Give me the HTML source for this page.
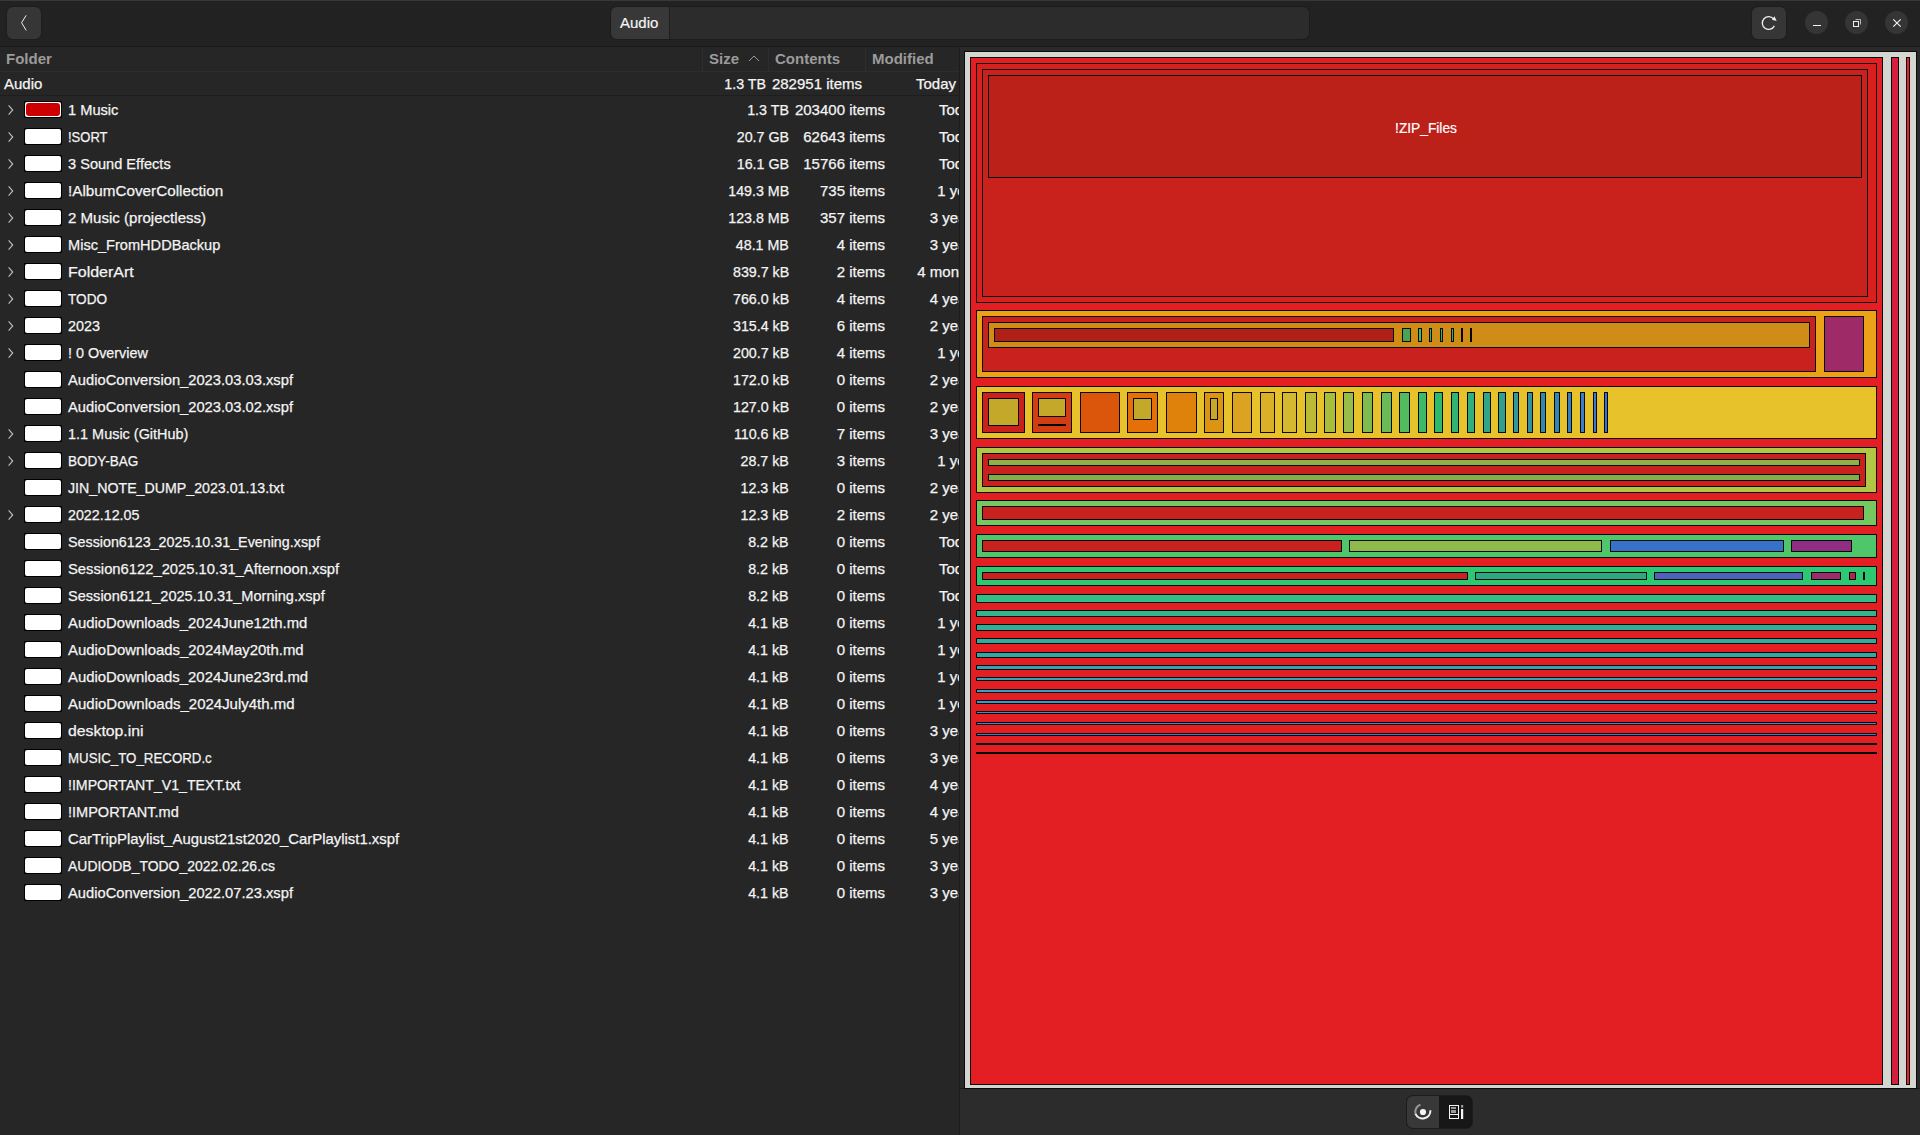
<!DOCTYPE html>
<html><head><meta charset="utf-8"><title>Baobab</title>
<style>
html,body{margin:0;padding:0;}
body{width:1920px;height:1135px;position:relative;overflow:hidden;background:#262626;font-family:"Liberation Sans",sans-serif;color:#f2f2f2;}
.abs{position:absolute;}
#hdr{position:absolute;left:0;top:0;width:1920px;height:46px;background:#222222;}
#hdrtop{position:absolute;left:0;top:0;width:1920px;height:1px;background:#383838;}
#hdrbot{position:absolute;left:0;top:46px;width:1920px;height:1px;background:#1a1a1a;}
.btn{position:absolute;top:7px;width:34px;height:32px;border-radius:6px;background:#363636;box-shadow:0 0 0 1px #1d1d1d;}
#path{position:absolute;left:611px;top:7px;width:698px;height:32px;border-radius:6px;background:#2c2c2c;box-shadow:0 0 0 1px #1c1c1c;overflow:hidden;}
#pathseg{position:absolute;left:0;top:0;width:58px;height:32px;background:#383838;border-right:1px solid #1e1e1e;}
#pathtxt{position:absolute;left:9px;top:0;line-height:32px;font-size:15px;color:#f4f4f4;-webkit-text-stroke:0.2px #f4f4f4;}
.circ{position:absolute;top:11px;width:23px;height:23px;border-radius:12px;background:#353535;}
#left{position:absolute;left:0;top:47px;width:959px;height:1088px;background:#262626;overflow:hidden;}
#vsep{position:absolute;left:959px;top:47px;width:1px;height:1088px;background:#1c1c1c;}
#right{position:absolute;left:960px;top:47px;width:960px;height:1088px;background:#2a2a2a;}
#bottombar{position:absolute;left:960px;top:1089px;width:960px;height:46px;background:#2c2c2c;}
.colh{position:absolute;top:0;height:24px;line-height:24px;font-size:15px;font-weight:bold;color:#9b9b9b;}
.colsep{position:absolute;top:0;width:1px;height:24px;background:#2e2e2e;}
.t{position:absolute;height:27px;line-height:27px;font-size:15px;white-space:nowrap;color:#f4f4f4;-webkit-text-stroke:0.25px #f4f4f4;}
.nm{left:68px;transform-origin:0 0;}
.sz{right:170px;text-align:right;transform:scaleX(0.95);transform-origin:100% 0;}
.ct{right:74px;text-align:right;}
.md{right:-20px;text-align:right;}
.chev{position:absolute;left:7px;}
.sw{position:absolute;left:24px;width:38px;height:17px;background:#000;border-radius:1px;}
.sw i{position:absolute;left:1px;top:1px;width:36px;height:15px;background:#fff;border-radius:2px;}
.sw.red i::after{content:"";position:absolute;left:1px;top:1px;width:34px;height:13px;background:#cc0000;border-radius:3px;}
.b{position:absolute;box-sizing:border-box;border:1px solid #0a0a0a;}
</style></head><body>
<div id="hdr"></div><div id="hdrtop"></div><div id="hdrbot"></div>
<div class="btn" style="left:7px"><svg width="34" height="32" viewBox="0 0 34 32" style="position:absolute;left:0;top:0"><path d="M19.2 8.3 L14.6 15.7 L19.2 23.4" fill="none" stroke="#f0f0f0" stroke-width="1.0"/></svg></div>
<div id="path"><div id="pathseg"></div><div id="pathtxt">Audio</div></div>
<div class="btn" style="left:1752px"><svg width="34" height="32" viewBox="0 0 34 32" style="position:absolute;left:0;top:0">
<path d="M21.6 11.9 A6.4 6.4 0 1 0 22.4 18.9" fill="none" stroke="#f0f0f0" stroke-width="1.3"/>
<path d="M22.4 9.2 L24.7 14 L19.9 12.8 Z" fill="#f0f0f0"/></svg></div>
<div class="circ" style="left:1805px"><div style="position:absolute;left:8px;top:13.6px;width:8px;height:1.5px;background:#f0f0f0"></div></div>
<div class="circ" style="left:1845px"><svg width="24" height="24" viewBox="0 0 24 24" style="position:absolute;left:0;top:0"><rect x="8.5" y="10.5" width="5" height="5" fill="none" stroke="#f0f0f0" stroke-width="1"/><path d="M10.5 8.5 H15.5 V13.5" fill="none" stroke="#b8b8b8" stroke-width="1"/></svg></div>
<div class="circ" style="left:1885px"><svg width="24" height="24" viewBox="0 0 24 24" style="position:absolute;left:0;top:0"><path d="M8.3 8.3 L15.7 15.7 M15.7 8.3 L8.3 15.7" stroke="#f0f0f0" stroke-width="1.2"/></svg></div>

<div id="left">
<div class="colh" style="left:6px">Folder</div>
<div class="colh" style="left:709px">Size</div>
<svg style="position:absolute;left:748px;top:8px" width="12" height="7" viewBox="0 0 12 7"><path d="M1 6 L6 1 L11 6" fill="none" stroke="#9b9b9b" stroke-width="1"/></svg>
<div class="colh" style="left:775px">Contents</div>
<div class="colh" style="left:872px">Modified</div>
<div class="colsep" style="left:702px"></div>
<div class="colsep" style="left:768px"></div>
<div class="colsep" style="left:865px"></div>
<div style="position:absolute;left:0;top:24px;width:959px;height:1px;background:#2d2d2d"></div>
<div style="position:absolute;left:0;top:48px;width:959px;height:1px;background:#1e1e1e"></div>
</div>
<div id="vsep"></div>
<div class="t" style="left:4px;top:72px;height:24px;line-height:24px">Audio</div>
<div class="t" style="left:0;width:766px;top:72px;height:24px;line-height:24px;text-align:right;transform:scaleX(0.95);transform-origin:100% 0">1.3 TB</div>
<div class="t" style="left:0;width:862px;top:72px;height:24px;line-height:24px;text-align:right">282951 items</div>
<div class="t" style="left:0;width:956px;top:72px;height:24px;line-height:24px;text-align:right">Today</div>
<div id="rows" style="position:absolute;left:0;top:0;width:959px;height:1135px;overflow:hidden">
<svg class="chev" style="top:104px" width="8" height="12" viewBox="0 0 8 12"><path d="M1.6 1.4 L5.7 6 L1.6 10.6" fill="none" stroke="#bcbcbc" stroke-width="1.15"/></svg>
<div class="sw red" style="top:101px"><i></i></div>
<div class="t nm" style="top:96px;transform:scaleX(0.976)">1 Music</div>
<div class="t sz" style="top:96px">1.3 TB</div>
<div class="t ct" style="top:96px">203400 items</div>
<div class="t md" style="top:96px">Today</div>
<svg class="chev" style="top:131px" width="8" height="12" viewBox="0 0 8 12"><path d="M1.6 1.4 L5.7 6 L1.6 10.6" fill="none" stroke="#bcbcbc" stroke-width="1.15"/></svg>
<div class="sw" style="top:128px"><i></i></div>
<div class="t nm" style="top:123px;transform:scaleX(0.867)">!SORT</div>
<div class="t sz" style="top:123px">20.7 GB</div>
<div class="t ct" style="top:123px">62643 items</div>
<div class="t md" style="top:123px">Today</div>
<svg class="chev" style="top:158px" width="8" height="12" viewBox="0 0 8 12"><path d="M1.6 1.4 L5.7 6 L1.6 10.6" fill="none" stroke="#bcbcbc" stroke-width="1.15"/></svg>
<div class="sw" style="top:155px"><i></i></div>
<div class="t nm" style="top:150px;transform:scaleX(0.972)">3 Sound Effects</div>
<div class="t sz" style="top:150px">16.1 GB</div>
<div class="t ct" style="top:150px">15766 items</div>
<div class="t md" style="top:150px">Today</div>
<svg class="chev" style="top:185px" width="8" height="12" viewBox="0 0 8 12"><path d="M1.6 1.4 L5.7 6 L1.6 10.6" fill="none" stroke="#bcbcbc" stroke-width="1.15"/></svg>
<div class="sw" style="top:182px"><i></i></div>
<div class="t nm" style="top:177px;transform:scaleX(1.017)">!AlbumCoverCollection</div>
<div class="t sz" style="top:177px">149.3 MB</div>
<div class="t ct" style="top:177px">735 items</div>
<div class="t md" style="top:177px">1 year</div>
<svg class="chev" style="top:212px" width="8" height="12" viewBox="0 0 8 12"><path d="M1.6 1.4 L5.7 6 L1.6 10.6" fill="none" stroke="#bcbcbc" stroke-width="1.15"/></svg>
<div class="sw" style="top:209px"><i></i></div>
<div class="t nm" style="top:204px;transform:scaleX(1.004)">2 Music (projectless)</div>
<div class="t sz" style="top:204px">123.8 MB</div>
<div class="t ct" style="top:204px">357 items</div>
<div class="t md" style="top:204px">3 years</div>
<svg class="chev" style="top:239px" width="8" height="12" viewBox="0 0 8 12"><path d="M1.6 1.4 L5.7 6 L1.6 10.6" fill="none" stroke="#bcbcbc" stroke-width="1.15"/></svg>
<div class="sw" style="top:236px"><i></i></div>
<div class="t nm" style="top:231px;transform:scaleX(0.972)">Misc_FromHDDBackup</div>
<div class="t sz" style="top:231px">48.1 MB</div>
<div class="t ct" style="top:231px">4 items</div>
<div class="t md" style="top:231px">3 years</div>
<svg class="chev" style="top:266px" width="8" height="12" viewBox="0 0 8 12"><path d="M1.6 1.4 L5.7 6 L1.6 10.6" fill="none" stroke="#bcbcbc" stroke-width="1.15"/></svg>
<div class="sw" style="top:263px"><i></i></div>
<div class="t nm" style="top:258px;transform:scaleX(1.066)">FolderArt</div>
<div class="t sz" style="top:258px">839.7 kB</div>
<div class="t ct" style="top:258px">2 items</div>
<div class="t md" style="top:258px">4 months</div>
<svg class="chev" style="top:293px" width="8" height="12" viewBox="0 0 8 12"><path d="M1.6 1.4 L5.7 6 L1.6 10.6" fill="none" stroke="#bcbcbc" stroke-width="1.15"/></svg>
<div class="sw" style="top:290px"><i></i></div>
<div class="t nm" style="top:285px;transform:scaleX(0.907)">TODO</div>
<div class="t sz" style="top:285px">766.0 kB</div>
<div class="t ct" style="top:285px">4 items</div>
<div class="t md" style="top:285px">4 years</div>
<svg class="chev" style="top:320px" width="8" height="12" viewBox="0 0 8 12"><path d="M1.6 1.4 L5.7 6 L1.6 10.6" fill="none" stroke="#bcbcbc" stroke-width="1.15"/></svg>
<div class="sw" style="top:317px"><i></i></div>
<div class="t nm" style="top:312px;transform:scaleX(0.959)">2023</div>
<div class="t sz" style="top:312px">315.4 kB</div>
<div class="t ct" style="top:312px">6 items</div>
<div class="t md" style="top:312px">2 years</div>
<svg class="chev" style="top:347px" width="8" height="12" viewBox="0 0 8 12"><path d="M1.6 1.4 L5.7 6 L1.6 10.6" fill="none" stroke="#bcbcbc" stroke-width="1.15"/></svg>
<div class="sw" style="top:344px"><i></i></div>
<div class="t nm" style="top:339px;transform:scaleX(0.958)">! 0 Overview</div>
<div class="t sz" style="top:339px">200.7 kB</div>
<div class="t ct" style="top:339px">4 items</div>
<div class="t md" style="top:339px">1 year</div>
<div class="sw" style="top:371px"><i></i></div>
<div class="t nm" style="top:366px;transform:scaleX(0.981)">AudioConversion_2023.03.03.xspf</div>
<div class="t sz" style="top:366px">172.0 kB</div>
<div class="t ct" style="top:366px">0 items</div>
<div class="t md" style="top:366px">2 years</div>
<div class="sw" style="top:398px"><i></i></div>
<div class="t nm" style="top:393px;transform:scaleX(0.981)">AudioConversion_2023.03.02.xspf</div>
<div class="t sz" style="top:393px">127.0 kB</div>
<div class="t ct" style="top:393px">0 items</div>
<div class="t md" style="top:393px">2 years</div>
<svg class="chev" style="top:428px" width="8" height="12" viewBox="0 0 8 12"><path d="M1.6 1.4 L5.7 6 L1.6 10.6" fill="none" stroke="#bcbcbc" stroke-width="1.15"/></svg>
<div class="sw" style="top:425px"><i></i></div>
<div class="t nm" style="top:420px;transform:scaleX(0.963)">1.1 Music (GitHub)</div>
<div class="t sz" style="top:420px">110.6 kB</div>
<div class="t ct" style="top:420px">7 items</div>
<div class="t md" style="top:420px">3 years</div>
<svg class="chev" style="top:455px" width="8" height="12" viewBox="0 0 8 12"><path d="M1.6 1.4 L5.7 6 L1.6 10.6" fill="none" stroke="#bcbcbc" stroke-width="1.15"/></svg>
<div class="sw" style="top:452px"><i></i></div>
<div class="t nm" style="top:447px;transform:scaleX(0.903)">BODY-BAG</div>
<div class="t sz" style="top:447px">28.7 kB</div>
<div class="t ct" style="top:447px">3 items</div>
<div class="t md" style="top:447px">1 year</div>
<div class="sw" style="top:479px"><i></i></div>
<div class="t nm" style="top:474px;transform:scaleX(0.946)">JIN_NOTE_DUMP_2023.01.13.txt</div>
<div class="t sz" style="top:474px">12.3 kB</div>
<div class="t ct" style="top:474px">0 items</div>
<div class="t md" style="top:474px">2 years</div>
<svg class="chev" style="top:509px" width="8" height="12" viewBox="0 0 8 12"><path d="M1.6 1.4 L5.7 6 L1.6 10.6" fill="none" stroke="#bcbcbc" stroke-width="1.15"/></svg>
<div class="sw" style="top:506px"><i></i></div>
<div class="t nm" style="top:501px;transform:scaleX(0.951)">2022.12.05</div>
<div class="t sz" style="top:501px">12.3 kB</div>
<div class="t ct" style="top:501px">2 items</div>
<div class="t md" style="top:501px">2 years</div>
<div class="sw" style="top:533px"><i></i></div>
<div class="t nm" style="top:528px;transform:scaleX(0.953)">Session6123_2025.10.31_Evening.xspf</div>
<div class="t sz" style="top:528px">8.2 kB</div>
<div class="t ct" style="top:528px">0 items</div>
<div class="t md" style="top:528px">Today</div>
<div class="sw" style="top:560px"><i></i></div>
<div class="t nm" style="top:555px;transform:scaleX(0.985)">Session6122_2025.10.31_Afternoon.xspf</div>
<div class="t sz" style="top:555px">8.2 kB</div>
<div class="t ct" style="top:555px">0 items</div>
<div class="t md" style="top:555px">Today</div>
<div class="sw" style="top:587px"><i></i></div>
<div class="t nm" style="top:582px;transform:scaleX(0.971)">Session6121_2025.10.31_Morning.xspf</div>
<div class="t sz" style="top:582px">8.2 kB</div>
<div class="t ct" style="top:582px">0 items</div>
<div class="t md" style="top:582px">Today</div>
<div class="sw" style="top:614px"><i></i></div>
<div class="t nm" style="top:609px;transform:scaleX(0.993)">AudioDownloads_2024June12th.md</div>
<div class="t sz" style="top:609px">4.1 kB</div>
<div class="t ct" style="top:609px">0 items</div>
<div class="t md" style="top:609px">1 year</div>
<div class="sw" style="top:641px"><i></i></div>
<div class="t nm" style="top:636px;transform:scaleX(0.995)">AudioDownloads_2024May20th.md</div>
<div class="t sz" style="top:636px">4.1 kB</div>
<div class="t ct" style="top:636px">0 items</div>
<div class="t md" style="top:636px">1 year</div>
<div class="sw" style="top:668px"><i></i></div>
<div class="t nm" style="top:663px;transform:scaleX(0.993)">AudioDownloads_2024June23rd.md</div>
<div class="t sz" style="top:663px">4.1 kB</div>
<div class="t ct" style="top:663px">0 items</div>
<div class="t md" style="top:663px">1 year</div>
<div class="sw" style="top:695px"><i></i></div>
<div class="t nm" style="top:690px;transform:scaleX(0.999)">AudioDownloads_2024July4th.md</div>
<div class="t sz" style="top:690px">4.1 kB</div>
<div class="t ct" style="top:690px">0 items</div>
<div class="t md" style="top:690px">1 year</div>
<div class="sw" style="top:722px"><i></i></div>
<div class="t nm" style="top:717px;transform:scaleX(1.054)">desktop.ini</div>
<div class="t sz" style="top:717px">4.1 kB</div>
<div class="t ct" style="top:717px">0 items</div>
<div class="t md" style="top:717px">3 years</div>
<div class="sw" style="top:749px"><i></i></div>
<div class="t nm" style="top:744px;transform:scaleX(0.886)">MUSIC_TO_RECORD.c</div>
<div class="t sz" style="top:744px">4.1 kB</div>
<div class="t ct" style="top:744px">0 items</div>
<div class="t md" style="top:744px">3 years</div>
<div class="sw" style="top:776px"><i></i></div>
<div class="t nm" style="top:771px;transform:scaleX(0.943)">!IMPORTANT_V1_TEXT.txt</div>
<div class="t sz" style="top:771px">4.1 kB</div>
<div class="t ct" style="top:771px">0 items</div>
<div class="t md" style="top:771px">4 years</div>
<div class="sw" style="top:803px"><i></i></div>
<div class="t nm" style="top:798px;transform:scaleX(0.968)">!IMPORTANT.md</div>
<div class="t sz" style="top:798px">4.1 kB</div>
<div class="t ct" style="top:798px">0 items</div>
<div class="t md" style="top:798px">4 years</div>
<div class="sw" style="top:830px"><i></i></div>
<div class="t nm" style="top:825px;transform:scaleX(0.992)">CarTripPlaylist_August21st2020_CarPlaylist1.xspf</div>
<div class="t sz" style="top:825px">4.1 kB</div>
<div class="t ct" style="top:825px">0 items</div>
<div class="t md" style="top:825px">5 years</div>
<div class="sw" style="top:857px"><i></i></div>
<div class="t nm" style="top:852px;transform:scaleX(0.931)">AUDIODB_TODO_2022.02.26.cs</div>
<div class="t sz" style="top:852px">4.1 kB</div>
<div class="t ct" style="top:852px">0 items</div>
<div class="t md" style="top:852px">3 years</div>
<div class="sw" style="top:884px"><i></i></div>
<div class="t nm" style="top:879px;transform:scaleX(0.981)">AudioConversion_2022.07.23.xspf</div>
<div class="t sz" style="top:879px">4.1 kB</div>
<div class="t ct" style="top:879px">0 items</div>
<div class="t md" style="top:879px">3 years</div>
</div>
<div id="right"></div>
<div id="bottombar"></div>
<div style="position:absolute;left:960px;top:1088px;width:960px;height:1px;background:#1c1c1c"></div>
<div class="b" style="left:964px;top:51px;width:953px;height:1038px;background:#d3d7cf"></div>
<div class="b" style="left:970px;top:57px;width:913px;height:1028px;background:#e31f24"></div>
<div class="b" style="left:1891px;top:57px;width:8px;height:1028px;background:#d4203c"></div>
<div class="b" style="left:1906px;top:57px;width:4px;height:1028px;background:#f01f2e"></div>
<div class="b" style="left:976px;top:63px;width:901px;height:240px;background:#d9201f"></div>
<div class="b" style="left:982px;top:69px;width:886px;height:228px;background:#c9221c"></div>
<div class="b" style="left:988px;top:75px;width:874px;height:103px;background:#bb2019"></div>
<div class="b" style="left:976px;top:310px;width:901px;height:68px;background:#eca218"></div>
<div class="b" style="left:982px;top:316px;width:834px;height:56px;background:#c9211d"></div>
<div class="b" style="left:988px;top:322px;width:822px;height:26px;background:#cf8c17"></div>
<div class="b" style="left:994px;top:328px;width:400px;height:14px;background:#b02016"></div>
<div class="b" style="left:1402px;top:328px;width:9px;height:14px;background:#4aa552"></div>
<div class="b" style="left:1418px;top:328px;width:4px;height:14px;background:#3dba6a"></div>
<div class="b" style="left:1429px;top:328px;width:3px;height:14px;background:#2fb06b"></div>
<div class="b" style="left:1440px;top:328px;width:3px;height:14px;background:#2fb06b"></div>
<div class="b" style="left:1451px;top:328px;width:3px;height:14px;background:#2fb06b"></div>
<div class="b" style="left:1461px;top:328px;width:2px;height:14px;background:#050505;border:0"></div>
<div class="b" style="left:1470px;top:328px;width:2px;height:14px;background:#050505;border:0"></div>
<div class="b" style="left:1824px;top:316px;width:40px;height:56px;background:#9e2b68"></div>
<div class="b" style="left:976px;top:386px;width:901px;height:53px;background:#e8c22a"></div>
<div class="b" style="left:982px;top:392px;width:43px;height:41px;background:#c9211d"></div>
<div class="b" style="left:988px;top:398px;width:31px;height:28px;background:#c4a82a"></div>
<div class="b" style="left:1032px;top:392px;width:40px;height:41px;background:#d43c13"></div>
<div class="b" style="left:1038px;top:398px;width:28px;height:19px;background:#c4a82a"></div>
<div class="b" style="left:1038px;top:424px;width:28px;height:2px;background:#050505;border:0"></div>
<div class="b" style="left:1080px;top:392px;width:40px;height:41px;background:#db550a"></div>
<div class="b" style="left:1127px;top:392px;width:31px;height:41px;background:#e57008"></div>
<div class="b" style="left:1133px;top:398px;width:19px;height:22px;background:#c4a82a"></div>
<div class="b" style="left:1166px;top:392px;width:31px;height:41px;background:#df820c"></div>
<div class="b" style="left:1204px;top:392px;width:20px;height:41px;background:#dc9414"></div>
<div class="b" style="left:1210px;top:398px;width:8px;height:22px;background:#c4a82a"></div>
<div class="b" style="left:1232px;top:392px;width:20px;height:41px;background:#dba31f"></div>
<div class="b" style="left:1260px;top:392px;width:15px;height:41px;background:#d9b028"></div>
<div class="b" style="left:1282px;top:392px;width:15px;height:41px;background:#d3b830"></div>
<div class="b" style="left:1305px;top:392px;width:12px;height:41px;background:#bcbb35"></div>
<div class="b" style="left:1324px;top:392px;width:12px;height:41px;background:#a9bd3c"></div>
<div class="b" style="left:1343px;top:392px;width:11px;height:41px;background:#95bd47"></div>
<div class="b" style="left:1362px;top:392px;width:11px;height:41px;background:#7fbb4e"></div>
<div class="b" style="left:1381px;top:392px;width:11px;height:41px;background:#6abb57"></div>
<div class="b" style="left:1399px;top:392px;width:11px;height:41px;background:#52bb5e"></div>
<div class="b" style="left:1418px;top:392px;width:9px;height:41px;background:#3cba68"></div>
<div class="b" style="left:1434px;top:392px;width:9px;height:41px;background:#2fb96d"></div>
<div class="b" style="left:1451px;top:392px;width:8px;height:41px;background:#30b574"></div>
<div class="b" style="left:1467px;top:392px;width:8px;height:41px;background:#30ae7b"></div>
<div class="b" style="left:1483px;top:392px;width:8px;height:41px;background:#2fa687"></div>
<div class="b" style="left:1498px;top:392px;width:8px;height:41px;background:#319e8e"></div>
<div class="b" style="left:1513px;top:392px;width:6px;height:41px;background:#3298a0"></div>
<div class="b" style="left:1527px;top:392px;width:6px;height:41px;background:#3292a2"></div>
<div class="b" style="left:1540px;top:392px;width:6px;height:41px;background:#3289af"></div>
<div class="b" style="left:1554px;top:392px;width:6px;height:41px;background:#3385b5"></div>
<div class="b" style="left:1567px;top:392px;width:5px;height:41px;background:#3580c2"></div>
<div class="b" style="left:1580px;top:392px;width:5px;height:41px;background:#3b7ed0"></div>
<div class="b" style="left:1593px;top:392px;width:4px;height:41px;background:#3b78d8"></div>
<div class="b" style="left:1604px;top:392px;width:4px;height:41px;background:#3a6fd8"></div>
<div class="b" style="left:976px;top:447px;width:901px;height:46px;background:#b0c845"></div>
<div class="b" style="left:982px;top:453px;width:884px;height:34px;background:#c9211d"></div>
<div class="b" style="left:988px;top:459px;width:872px;height:7px;background:#8fb045"></div>
<div class="b" style="left:988px;top:474px;width:872px;height:7px;background:#80ae49"></div>
<div class="b" style="left:976px;top:500px;width:901px;height:26px;background:#75c760"></div>
<div class="b" style="left:982px;top:506px;width:882px;height:14px;background:#c9211d"></div>
<div class="b" style="left:976px;top:534px;width:901px;height:24px;background:#50c66a"></div>
<div class="b" style="left:982px;top:540px;width:360px;height:12px;background:#c9211d"></div>
<div class="b" style="left:1349px;top:540px;width:253px;height:12px;background:#8fba4b"></div>
<div class="b" style="left:1610px;top:540px;width:174px;height:12px;background:#3673c8"></div>
<div class="b" style="left:1791px;top:540px;width:61px;height:12px;background:#8f2f82"></div>
<div class="b" style="left:976px;top:566px;width:901px;height:20px;background:#2ec873"></div>
<div class="b" style="left:982px;top:572px;width:486px;height:8px;background:#c9211d"></div>
<div class="b" style="left:1475px;top:572px;width:172px;height:8px;background:#2ea87f"></div>
<div class="b" style="left:1654px;top:572px;width:149px;height:8px;background:#4b62bd"></div>
<div class="b" style="left:1811px;top:572px;width:30px;height:8px;background:#9a2d6e"></div>
<div class="b" style="left:1849px;top:572px;width:7px;height:8px;background:#b5234e"></div>
<div class="b" style="left:1863px;top:572px;width:2px;height:8px;background:#050505;border:0"></div>
<div class="b" style="left:976px;top:594px;width:901px;height:9px;background:#34bd84"></div>
<div class="b" style="left:976px;top:610px;width:901px;height:7px;background:#32b58c"></div>
<div class="b" style="left:976px;top:624px;width:901px;height:7px;background:#31ae93"></div>
<div class="b" style="left:976px;top:638px;width:901px;height:6px;background:#33aa9e"></div>
<div class="b" style="left:976px;top:652px;width:901px;height:6px;background:#32a7a6"></div>
<div class="b" style="left:976px;top:665px;width:901px;height:5px;background:#34a2b5"></div>
<div class="b" style="left:976px;top:677px;width:901px;height:4px;background:#35a2c0"></div>
<div class="b" style="left:976px;top:689px;width:901px;height:4px;background:#369fca"></div>
<div class="b" style="left:976px;top:700px;width:901px;height:4px;background:#3a9ad0"></div>
<div class="b" style="left:976px;top:711px;width:901px;height:3px;background:#3b8fd0"></div>
<div class="b" style="left:976px;top:722px;width:901px;height:3px;background:#3b85d0"></div>
<div class="b" style="left:976px;top:733px;width:901px;height:3px;background:#3b7dd0"></div>
<div class="b" style="left:976px;top:743px;width:901px;height:2px;background:#050505;border:0"></div>
<div class="b" style="left:976px;top:752px;width:901px;height:2px;background:#050505;border:0"></div>
<div style="position:absolute;left:989px;top:77px;width:874px;height:103px;line-height:103px;text-align:center;font-size:14px;color:#ffffff;transform:scaleX(0.98);-webkit-text-stroke:0.2px #fff">!ZIP_Files</div>
<div style="position:absolute;left:1407px;top:1096px;width:65px;height:32px;border-radius:6px;background:#171717;overflow:hidden;box-shadow:0 0 0 1px #1c1c1c">
<div style="position:absolute;left:0;top:0;width:32px;height:32px;background:#383838"></div>
<svg width="65" height="32" viewBox="0 0 65 32" style="position:absolute;left:0;top:0">
<path d="M13.5 8.6 A7.8 7.8 0 0 0 8.5 17.9" fill="none" stroke="#9a9a9a" stroke-width="2"/>
<path d="M8.5 17.9 A7.8 7.8 0 0 0 23.4 14.2" fill="none" stroke="#f4f4f4" stroke-width="2"/>
<circle cx="16" cy="16" r="3.1" fill="#f4f4f4"/>
<rect x="42.5" y="9.5" width="9" height="13" fill="none" stroke="#f4f4f4" stroke-width="1"/>
<rect x="44" y="11" width="5" height="2" fill="#9a9a9a"/><rect x="44" y="14" width="5" height="3" fill="#9a9a9a"/>
<rect x="43" y="18" width="8" height="1" fill="#f4f4f4"/>
<rect x="54" y="13" width="2.2" height="10" fill="#f4f4f4"/><rect x="54" y="9" width="2.2" height="2.6" fill="#9a9a9a"/>
</svg></div>
</body></html>
